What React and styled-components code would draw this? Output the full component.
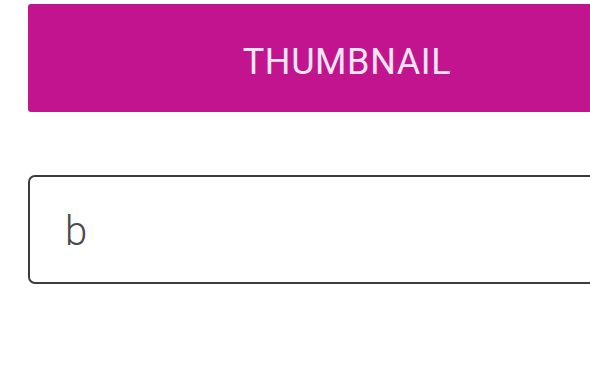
import styled, { createGlobalStyle } from "styled-components";

const Global = createGlobalStyle`
    html, body {
        margin: 0;
        padding: 0;
        background: #ffffff;
        overflow: hidden;
    }
`;

const Page = styled.main`
    width: 590px;
    height: 380px;
    padding: 4px 0 0 28px;
    box-sizing: border-box;
    display: flex;
    flex-direction: column;
    gap: 63px;
    overflow: hidden;
`;

const Button = styled.button`
    width: 638px;
    height: 108px;
    flex-shrink: 0;
    border: none;
    border-radius: 3px;
    background-color: #c2148e;
    color: #f6e6f2;
    font-family: Roboto, "Liberation Sans", sans-serif;
    font-size: 36px;
    font-weight: 400;
    letter-spacing: 0.6px;
    text-transform: uppercase;
    display: flex;
    align-items: center;
    justify-content: center;
    padding: 8px 0 0;
    cursor: pointer;
`;

const Field = styled.div`
    width: 638px;
    height: 109px;
    flex-shrink: 0;
    border: solid 2.5px #3c3c3c;
    border-radius: 7px;
    box-sizing: border-box;
    display: flex;
    align-items: center;
    padding: 0 0 0 35px;

    input {
        border: none;
        outline: none;
        background: transparent;
        width: 100%;
        font-family: Roboto, "Liberation Sans", sans-serif;
        font-size: 40px;
        font-weight: 300;
        color: #4a4a4a;
        padding: 0;
        margin-top: 4px;
    }
`;

export default function App() {
    return (
        <>
            <Global />
            <Page>
                <Button>Thumbnail</Button>
                <Field>
                    <input defaultValue="b" />
                </Field>
            </Page>
        </>
    );
}
